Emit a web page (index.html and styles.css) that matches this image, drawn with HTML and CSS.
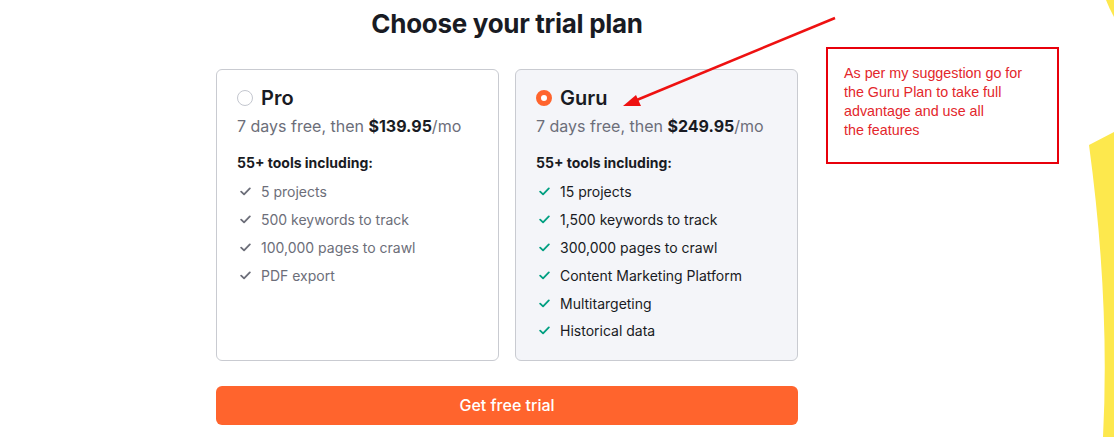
FILE: index.html
```html
<!DOCTYPE html>
<html lang="en">
<head>
<meta charset="utf-8">
<title>Choose your trial plan</title>
<link rel="stylesheet" href="styles.css">
</head>
<body>
<main class="page">
  <h1 class="title">Choose your trial plan</h1>
  <div class="plans">
    <section class="plan">
      <div class="plan-head"><span class="radio"></span><span class="plan-name">Pro</span></div>
      <p class="price">7 days free, then <b>$139.95</b>/mo</p>
      <p class="tools">55+ tools including:</p>
      <ul class="features">
        <li><svg class="check" viewBox="0 0 12 10"><path d="M1.2 5.2 4.4 8.2 10.8 1.6"/></svg>5 projects</li>
        <li><svg class="check" viewBox="0 0 12 10"><path d="M1.2 5.2 4.4 8.2 10.8 1.6"/></svg>500 keywords to track</li>
        <li><svg class="check" viewBox="0 0 12 10"><path d="M1.2 5.2 4.4 8.2 10.8 1.6"/></svg>100,000 pages to crawl</li>
        <li><svg class="check" viewBox="0 0 12 10"><path d="M1.2 5.2 4.4 8.2 10.8 1.6"/></svg>PDF export</li>
      </ul>
    </section>
    <section class="plan plan-selected">
      <div class="plan-head"><span class="radio radio-on"></span><span class="plan-name">Guru</span></div>
      <p class="price">7 days free, then <b>$249.95</b>/mo</p>
      <p class="tools">55+ tools including:</p>
      <ul class="features">
        <li><svg class="check" viewBox="0 0 12 10"><path d="M1.2 5.2 4.4 8.2 10.8 1.6"/></svg>15 projects</li>
        <li><svg class="check" viewBox="0 0 12 10"><path d="M1.2 5.2 4.4 8.2 10.8 1.6"/></svg>1,500 keywords to track</li>
        <li><svg class="check" viewBox="0 0 12 10"><path d="M1.2 5.2 4.4 8.2 10.8 1.6"/></svg>300,000 pages to crawl</li>
        <li><svg class="check" viewBox="0 0 12 10"><path d="M1.2 5.2 4.4 8.2 10.8 1.6"/></svg>Content Marketing Platform</li>
        <li><svg class="check" viewBox="0 0 12 10"><path d="M1.2 5.2 4.4 8.2 10.8 1.6"/></svg>Multitargeting</li>
        <li><svg class="check" viewBox="0 0 12 10"><path d="M1.2 5.2 4.4 8.2 10.8 1.6"/></svg>Historical data</li>
      </ul>
    </section>
  </div>
  <button class="cta" type="button">Get free trial</button>
</main>

<svg class="decor" viewBox="0 0 1114 437" width="1114" height="437">
  <path class="yellow" d="M1106 0 L1114 0 L1114 17 Q1109 8 1106 0 Z"/>
  <path class="yellow" d="M1089 145 L1114 132 L1114 437 L1103 437 Q1110 300 1089 145 Z"/>
  <line class="arrow-line" x1="835" y1="18" x2="632" y2="102"/>
  <polygon class="arrow-head" points="623,106 636,95 641,106"/>
</svg>

<aside class="note">As per my suggestion go for<br>the Guru Plan to take full<br>advantage and use all<br>the features</aside>
</body>
</html>
```

FILE: styles.css
```css
* { box-sizing: border-box; }

body {
  margin: 0;
  background: #ffffff;
  font-family: "Inter", "Noto Sans", sans-serif;
  color: #191b23;
  width: 1114px;
  height: 437px;
  overflow: hidden;
  position: relative;
}

.page {
  width: 582px;
  margin-left: 216px;
  padding-top: 8px;
  display: flex;
  flex-direction: column;
}

.title {
  margin: 0;
  text-align: center;
  font-size: 26px;
  line-height: 32px;
  font-weight: 700;
  letter-spacing: -0.3px;
  color: #191b23;
}

.plans {
  margin-top: 29px;
  display: grid;
  grid-template-columns: 283px 283px;
  column-gap: 16px;
}

.plan {
  border: 1px solid #c9cbd1;
  border-radius: 6px;
  padding: 16px 20px 15px 20px;
  background: #ffffff;
}

.plan-selected {
  background: #f4f5f9;
}

.plan-head {
  display: flex;
  align-items: center;
  gap: 8px;
  height: 24px;
}

.radio {
  width: 16px;
  height: 16px;
  border-radius: 50%;
  border: 1px solid #c4c7cf;
  background: #fff;
  flex: none;
}

.radio-on {
  border: 5px solid #ff642d;
  background: #fff;
}

.plan-name {
  font-size: 20px;
  font-weight: 600;
  line-height: 24px;
  color: #191b23;
}

.price {
  margin: 4px 0 0;
  font-size: 16px;
  line-height: 24px;
  color: #6c6e79;
}

.price b {
  color: #191b23;
  font-weight: 700;
}

.tools {
  margin: 15px 0 0;
  font-size: 14px;
  line-height: 20px;
  font-weight: 700;
  color: #191b23;
}

.features {
  list-style: none;
  margin: 5px 0 0;
  padding: 0;
}

.features li {
  display: flex;
  align-items: center;
  gap: 10px;
  height: 27.8px;
  font-size: 14px;
  color: #6c6e79;
  padding-left: 3px;
}

.check {
  width: 11px;
  height: 9px;
  flex: none;
  fill: none;
  stroke: #6c6e79;
  stroke-width: 2;
  stroke-linecap: round;
  stroke-linejoin: round;
}

.plan-selected .features li { color: #191b23; }
.plan-selected .check { stroke: #009f81; }

.cta {
  margin-top: 25px;
  height: 39px;
  width: 100%;
  border: 0;
  border-radius: 6px;
  background: #ff642d;
  color: #ffffff;
  font-family: "Inter", "Noto Sans", sans-serif;
  font-size: 16px;
  font-weight: 500;
}

.decor {
  position: absolute;
  left: 0;
  top: 0;
  pointer-events: none;
}

.yellow { fill: #fde84d; }

.arrow-line {
  stroke: #ee1111;
  stroke-width: 2.5;
}

.arrow-head { fill: #ee1111; }

.note {
  position: absolute;
  left: 826px;
  top: 47px;
  width: 233px;
  height: 117px;
  border: 2px solid #e8000b;
  padding: 15px 0 0 16px;
  font-family: "Liberation Sans", sans-serif;
  font-size: 14.3px;
  line-height: 19px;
  color: #e3262b;
}
```
